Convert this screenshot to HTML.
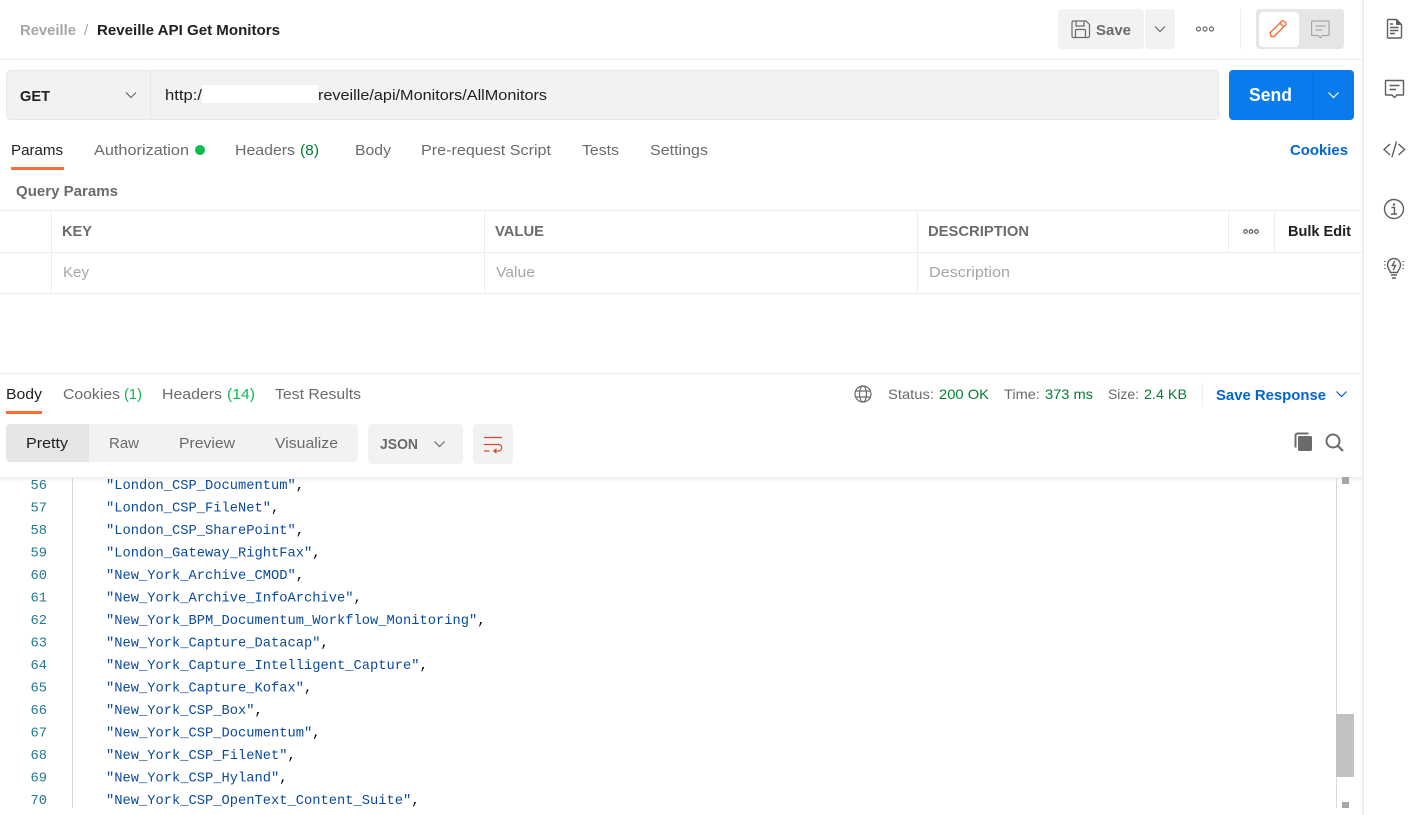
<!DOCTYPE html>
<html lang="en">
<head>
<meta charset="utf-8">
<title>Reveille API Get Monitors</title>
<style>
html,body{margin:0;padding:0;background:#fff;width:1422px;height:815px;overflow:hidden}
svg{display:block}
text{font-family:"Liberation Sans",sans-serif;font-size:15px;fill:#6b6b6b}
.b{font-weight:bold}
.d{fill:#212121}
.m{fill:#a6a6a6}
.g{fill:#007f31}
.l{fill:#0265d2}
.c{font-family:"Liberation Mono",monospace;font-size:13.75px;fill:#0a4a9c}
.n{font-family:"Liberation Mono",monospace;font-size:13.75px;fill:#237893;text-anchor:end}
.p{fill:#000;font-family:"Liberation Mono",monospace;font-size:13.75px}
.i{fill:none;stroke:#6b6b6b;stroke-width:1.200}
.h{fill:none;stroke:#6b6b6b;stroke-width:1.200}
.s{fill:none;stroke:#5f5f5f;stroke-width:1.400}
</style>
</head>
<body>
<svg width="1422" height="815" viewBox="0 0 1422 815" xmlns="http://www.w3.org/2000/svg">
<defs>
<linearGradient id="sh" x1="0" y1="0" x2="0" y2="1"><stop offset="0" stop-color="#000" stop-opacity=".07"/><stop offset="1" stop-color="#000" stop-opacity="0"/></linearGradient>
</defs>
<!-- structural lines -->
<rect x="0" y="59" width="1362" height="1" fill="#ededed"/>
<rect x="1362" y="0" width="2" height="815" fill="#ededed"/>

<!-- breadcrumb -->
<text x="20" y="35" class="b m" textLength="56" lengthAdjust="spacingAndGlyphs">Reveille</text>
<text x="84" y="35" class="m">/</text>
<text x="97" y="35" class="b d" textLength="183" lengthAdjust="spacingAndGlyphs">Reveille API Get Monitors</text>

<!-- save -->
<rect x="1058" y="9" width="86" height="40" rx="4" fill="#f2f2f2"/>
<rect x="1145" y="9" width="30" height="40" rx="4" fill="#f2f2f2"/>
<path d="M1073.500 21.500h12.500l3.500 3.500v11.500a1.500 1.500 0 0 1-1.500 1.500h-14.500a1.500 1.500 0 0 1-1.500-1.500v-13.500a1.500 1.500 0 0 1 1.500-1.500zM1076 21.500v5h8v-5M1075.500 38v-7a1 1 0 0 1 1-1h8a1 1 0 0 1 1 1v7" transform="translate(0 -.5)" class="i"/>
<text x="1096" y="35" class="b" textLength="35" lengthAdjust="spacingAndGlyphs">Save</text>
<path d="M1155 26.500l5 5 5-5" class="h"/>
<g class="i"><circle cx="1198.500" cy="29" r="2"/><circle cx="1205" cy="29" r="2"/><circle cx="1211.500" cy="29" r="2"/></g>
<rect x="1240" y="9" width="1" height="40" fill="#ededed"/>
<rect x="1256" y="9" width="88" height="40" rx="4" fill="#e6e6e6"/>
<rect x="1259" y="12" width="40" height="35" rx="4" fill="#fff"/>
<path d="M1271 36.500l-.8-3.800 11.500-11.500a1.700 1.700 0 0 1 2.400 0l1.400 1.400a1.700 1.700 0 0 1 0 2.400l-11.500 11.500zM1279.800 23l3.800 3.800" fill="none" stroke="#ff6c37" stroke-width="1.400"/>
<path d="M1312 21h16.500a.5.500 0 0 1 .5.500v13.500a.5.500 0 0 1-.5.500h-6l-2.200 2.200-2.200-2.200h-6a.5.500 0 0 1-.5-.5v-13.500a.5.500 0 0 1 .5-.5zM1315.500 26h10M1315.500 30h6.500" fill="none" stroke="#a6a6a6" stroke-width="1.200"/>

<!-- URL bar -->
<rect x="6.500" y="70.500" width="1212" height="49" rx="4" fill="#f2f2f2" stroke="#e8e8e8"/>
<rect x="150" y="71" width="1" height="48" fill="#e6e6e6"/>
<text x="20" y="101" class="b d" textLength="30" lengthAdjust="spacingAndGlyphs">GET</text>
<path d="M126 92.500l5 5 5-5" class="h"/>
<text x="165" y="100" class="d" textLength="37" lengthAdjust="spacingAndGlyphs">http:/</text>
<rect x="202" y="85" width="116" height="18" fill="#fff"/>
<text x="318" y="100" class="d" textLength="229" lengthAdjust="spacingAndGlyphs">reveille/api/Monitors/AllMonitors</text>
<rect x="1229" y="70" width="125" height="50" rx="4" fill="#097bed"/>
<rect x="1313" y="70" width="1" height="50" fill="#0a6dd4"/>
<text x="1249" y="101" class="b" style="fill:#fff;font-size:18px" textLength="43" lengthAdjust="spacingAndGlyphs">Send</text>
<path d="M1328.500 92.500l5 5 5-5" fill="none" stroke="#fff" stroke-width="1.200"/>

<!-- request tabs -->
<text x="11" y="155" class="d" textLength="52" lengthAdjust="spacingAndGlyphs">Params</text>
<rect x="11" y="167" width="53" height="3" fill="#ff6c37"/>
<text x="94" y="155" textLength="95" lengthAdjust="spacingAndGlyphs">Authorization</text>
<circle cx="200" cy="150" r="5" fill="#0cbb52"/>
<text x="235" y="155" textLength="60" lengthAdjust="spacingAndGlyphs">Headers</text>
<text x="300" y="155" class="g" textLength="19" lengthAdjust="spacingAndGlyphs">(8)</text>
<text x="355" y="155" textLength="36" lengthAdjust="spacingAndGlyphs">Body</text>
<text x="421" y="155" textLength="130" lengthAdjust="spacingAndGlyphs">Pre-request Script</text>
<text x="582" y="155" textLength="37" lengthAdjust="spacingAndGlyphs">Tests</text>
<text x="650" y="155" textLength="58" lengthAdjust="spacingAndGlyphs">Settings</text>
<text x="1290" y="155" class="b l" textLength="58" lengthAdjust="spacingAndGlyphs">Cookies</text>
<text x="16" y="196" class="b" textLength="102" lengthAdjust="spacingAndGlyphs">Query Params</text>

<!-- params table -->
<rect x="0" y="210" width="1362" height="1" fill="#ededed"/>
<rect x="0" y="252" width="1362" height="1" fill="#ededed"/>
<rect x="0" y="293" width="1362" height="1" fill="#ededed"/>
<rect x="51" y="211" width="1" height="82" fill="#ededed"/>
<rect x="484" y="211" width="1" height="82" fill="#ededed"/>
<rect x="917" y="211" width="1" height="82" fill="#ededed"/>
<rect x="1228" y="211" width="1" height="41" fill="#ededed"/>
<rect x="1274" y="211" width="1" height="41" fill="#ededed"/>
<text x="62" y="236" class="b" textLength="30" lengthAdjust="spacingAndGlyphs">KEY</text>
<text x="495" y="236" class="b" textLength="49" lengthAdjust="spacingAndGlyphs">VALUE</text>
<text x="928" y="236" class="b" textLength="101" lengthAdjust="spacingAndGlyphs">DESCRIPTION</text>
<g fill="none" stroke="#505050" stroke-width="1.100"><circle cx="1245.500" cy="231.500" r="1.800"/><circle cx="1251" cy="231.500" r="1.800"/><circle cx="1256.500" cy="231.500" r="1.800"/></g>
<text x="1288" y="236" class="b d" textLength="63" lengthAdjust="spacingAndGlyphs">Bulk Edit</text>
<text x="63" y="277" class="m" textLength="26" lengthAdjust="spacingAndGlyphs">Key</text>
<text x="496" y="277" class="m" textLength="39" lengthAdjust="spacingAndGlyphs">Value</text>
<text x="929" y="277" class="m" textLength="81" lengthAdjust="spacingAndGlyphs">Description</text>

<!-- response header -->
<rect x="0" y="373" width="1362" height="1" fill="#ededed"/>
<text x="6" y="399" class="d" textLength="36" lengthAdjust="spacingAndGlyphs">Body</text>
<rect x="6" y="411" width="36" height="3" fill="#ff6c37"/>
<text x="63" y="399" textLength="57" lengthAdjust="spacingAndGlyphs">Cookies</text>
<text x="124" y="399" style="fill:#0cbb52" textLength="18" lengthAdjust="spacingAndGlyphs">(1)</text>
<text x="162" y="399" textLength="60" lengthAdjust="spacingAndGlyphs">Headers</text>
<text x="227" y="399" style="fill:#0cbb52" textLength="28" lengthAdjust="spacingAndGlyphs">(14)</text>
<text x="275" y="399" textLength="86" lengthAdjust="spacingAndGlyphs">Test Results</text>

<g class="i"><circle cx="863" cy="394" r="8"/><ellipse cx="863" cy="394" rx="3.500" ry="8"/><path d="M855.500 391h15M855.500 397h15"/></g>
<text x="888" y="399" style="font-size:14px" textLength="46" lengthAdjust="spacingAndGlyphs">Status:</text>
<text x="939" y="399" class="g" style="font-size:14px" textLength="50" lengthAdjust="spacingAndGlyphs">200 OK</text>
<text x="1004" y="399" style="font-size:14px" textLength="36" lengthAdjust="spacingAndGlyphs">Time:</text>
<text x="1045" y="399" class="g" style="font-size:14px" textLength="48" lengthAdjust="spacingAndGlyphs">373 ms</text>
<text x="1108" y="399" style="font-size:14px" textLength="31" lengthAdjust="spacingAndGlyphs">Size:</text>
<text x="1144" y="399" class="g" style="font-size:14px" textLength="43" lengthAdjust="spacingAndGlyphs">2.4 KB</text>
<rect x="1202" y="382" width="1" height="25" fill="#ededed"/>
<text x="1216" y="400" class="b l" textLength="110" lengthAdjust="spacingAndGlyphs">Save Response</text>
<path d="M1336.500 391.500l5 5 5-5" fill="none" stroke="#0265d2" stroke-width="1.200"/>

<!-- response toolbar -->
<rect x="6" y="424" width="352" height="38" rx="4" fill="#f2f2f2"/>
<path d="M10 424h79v38h-79a4 4 0 0 1-4-4v-30a4 4 0 0 1 4-4z" fill="#e6e6e6"/>
<text x="26" y="448" class="d" textLength="42" lengthAdjust="spacingAndGlyphs">Pretty</text>
<text x="109" y="448" textLength="30" lengthAdjust="spacingAndGlyphs">Raw</text>
<text x="179" y="448" textLength="56" lengthAdjust="spacingAndGlyphs">Preview</text>
<text x="275" y="448" textLength="63" lengthAdjust="spacingAndGlyphs">Visualize</text>
<rect x="368" y="424" width="95" height="40" rx="4" fill="#f2f2f2"/>
<text x="380" y="449" class="b" textLength="38" lengthAdjust="spacingAndGlyphs">JSON</text>
<path d="M434.500 441.500l5 5 5-5" class="h"/>
<rect x="473" y="424" width="40" height="40" rx="4" fill="#f2f2f2"/>
<path d="M484 437.500h18M484 444.500h14.500a3.200 3.200 0 0 1 0 6.500h-4.500M496.500 448.800l-2.700 2.200 2.700 2.200M484 451h5.500" fill="none" stroke="#d1492e" stroke-width="1.200"/>
<path d="M1295.500 447.500v-12a2 2 0 0 1 2-2h11" fill="none" stroke="#6b6b6b" stroke-width="2"/>
<rect x="1298" y="436" width="14" height="15" rx="1.500" fill="#6b6b6b"/>
<circle cx="1333" cy="441" r="6.500" fill="none" stroke="#6b6b6b" stroke-width="2"/>
<path d="M1338 446l5 5" stroke="#6b6b6b" stroke-width="2.200" fill="none"/>

<!-- code -->
<rect x="72" y="478" width="1" height="330" fill="#d9d9d9"/>
<g transform="translate(0 -1)">
<text x="47" y="490" class="n">56</text><text x="106" y="490" class="c">"London_CSP_Documentum"<tspan class="p">,</tspan></text>
<text x="47" y="512.500" class="n">57</text><text x="106" y="512.500" class="c">"London_CSP_FileNet"<tspan class="p">,</tspan></text>
<text x="47" y="535" class="n">58</text><text x="106" y="535" class="c">"London_CSP_SharePoint"<tspan class="p">,</tspan></text>
<text x="47" y="557.500" class="n">59</text><text x="106" y="557.500" class="c">"London_Gateway_RightFax"<tspan class="p">,</tspan></text>
<text x="47" y="580" class="n">60</text><text x="106" y="580" class="c">"New_York_Archive_CMOD"<tspan class="p">,</tspan></text>
<text x="47" y="602.500" class="n">61</text><text x="106" y="602.500" class="c">"New_York_Archive_InfoArchive"<tspan class="p">,</tspan></text>
<text x="47" y="625" class="n">62</text><text x="106" y="625" class="c">"New_York_BPM_Documentum_Workflow_Monitoring"<tspan class="p">,</tspan></text>
<text x="47" y="647.500" class="n">63</text><text x="106" y="647.500" class="c">"New_York_Capture_Datacap"<tspan class="p">,</tspan></text>
<text x="47" y="670" class="n">64</text><text x="106" y="670" class="c">"New_York_Capture_Intelligent_Capture"<tspan class="p">,</tspan></text>
<text x="47" y="692.500" class="n">65</text><text x="106" y="692.500" class="c">"New_York_Capture_Kofax"<tspan class="p">,</tspan></text>
<text x="47" y="715" class="n">66</text><text x="106" y="715" class="c">"New_York_CSP_Box"<tspan class="p">,</tspan></text>
<text x="47" y="737.500" class="n">67</text><text x="106" y="737.500" class="c">"New_York_CSP_Documentum"<tspan class="p">,</tspan></text>
<text x="47" y="760" class="n">68</text><text x="106" y="760" class="c">"New_York_CSP_FileNet"<tspan class="p">,</tspan></text>
<text x="47" y="782.500" class="n">69</text><text x="106" y="782.500" class="c">"New_York_CSP_Hyland"<tspan class="p">,</tspan></text>
<text x="47" y="805" class="n">70</text><text x="106" y="805" class="c">"New_York_CSP_OpenText_Content_Suite"<tspan class="p">,</tspan></text>
</g>
<rect x="0" y="477" width="1362" height="5" fill="url(#sh)"/>

<!-- scrollbar -->
<rect x="1336" y="478" width="1" height="330" fill="#d9d9d9"/>
<rect x="1342" y="477" width="7" height="7" fill="#a6a6a6"/>
<rect x="1336" y="714" width="18" height="63" fill="#c1c1c1"/>
<rect x="1342" y="802" width="7" height="6" fill="#a6a6a6"/>

<!-- sidebar icons -->
<path d="M1388.500 19.500h8l5 5v12.500a1 1 0 0 1-1 1h-12a1 1 0 0 1-1-1v-16.500a1 1 0 0 1 1-1z" class="s"/>
<path d="M1396 19.500v5.500h5.500z" fill="#5f5f5f"/>
<path d="M1390 24h3M1390 27.500h8.500M1390 30.500h8.500M1390 33.500h5" class="s"/>
<path d="M1386 80.500h17a.5.500 0 0 1 .5.500v13.500a.5.500 0 0 1-.5.500h-6l-2.500 2.500-2.500-2.500h-6a.5.500 0 0 1-.5-.5v-13.500a.5.500 0 0 1 .5-.5zM1389.500 85.500h10M1389.500 89.500h6.500" class="s"/>
<path d="M1390 144l-6 5.500 6 5.500M1398.500 144l6 5.500-6 5.500M1396.500 141.500l-4.500 15.500" class="s"/>
<circle cx="1394" cy="209" r="9.500" class="s"/>
<path d="M1391.500 207.500h3v6M1391 214h6" class="s"/>
<circle cx="1394" cy="204.500" r="1.200" fill="#5f5f5f"/>
<path d="M1390.500 272.500c0-2-3-3.500-3-7.500a6.500 6.500 0 0 1 13 0c0 4-3 5.500-3 7.500zM1391 275h6M1392 278h4" class="s"/>
<path d="M1394.800 261l-2.600 4.500h3.400l-2.400 4.500" class="s"/>
<path d="M1384 261.500h1.500M1384 265h1.500M1384 268.500h1.500M1402.500 261.500h1.500M1402.500 265h1.500M1402.500 268.500h1.500" stroke="#5f5f5f" stroke-width="1" fill="none"/>
</svg>
</body>
</html>
